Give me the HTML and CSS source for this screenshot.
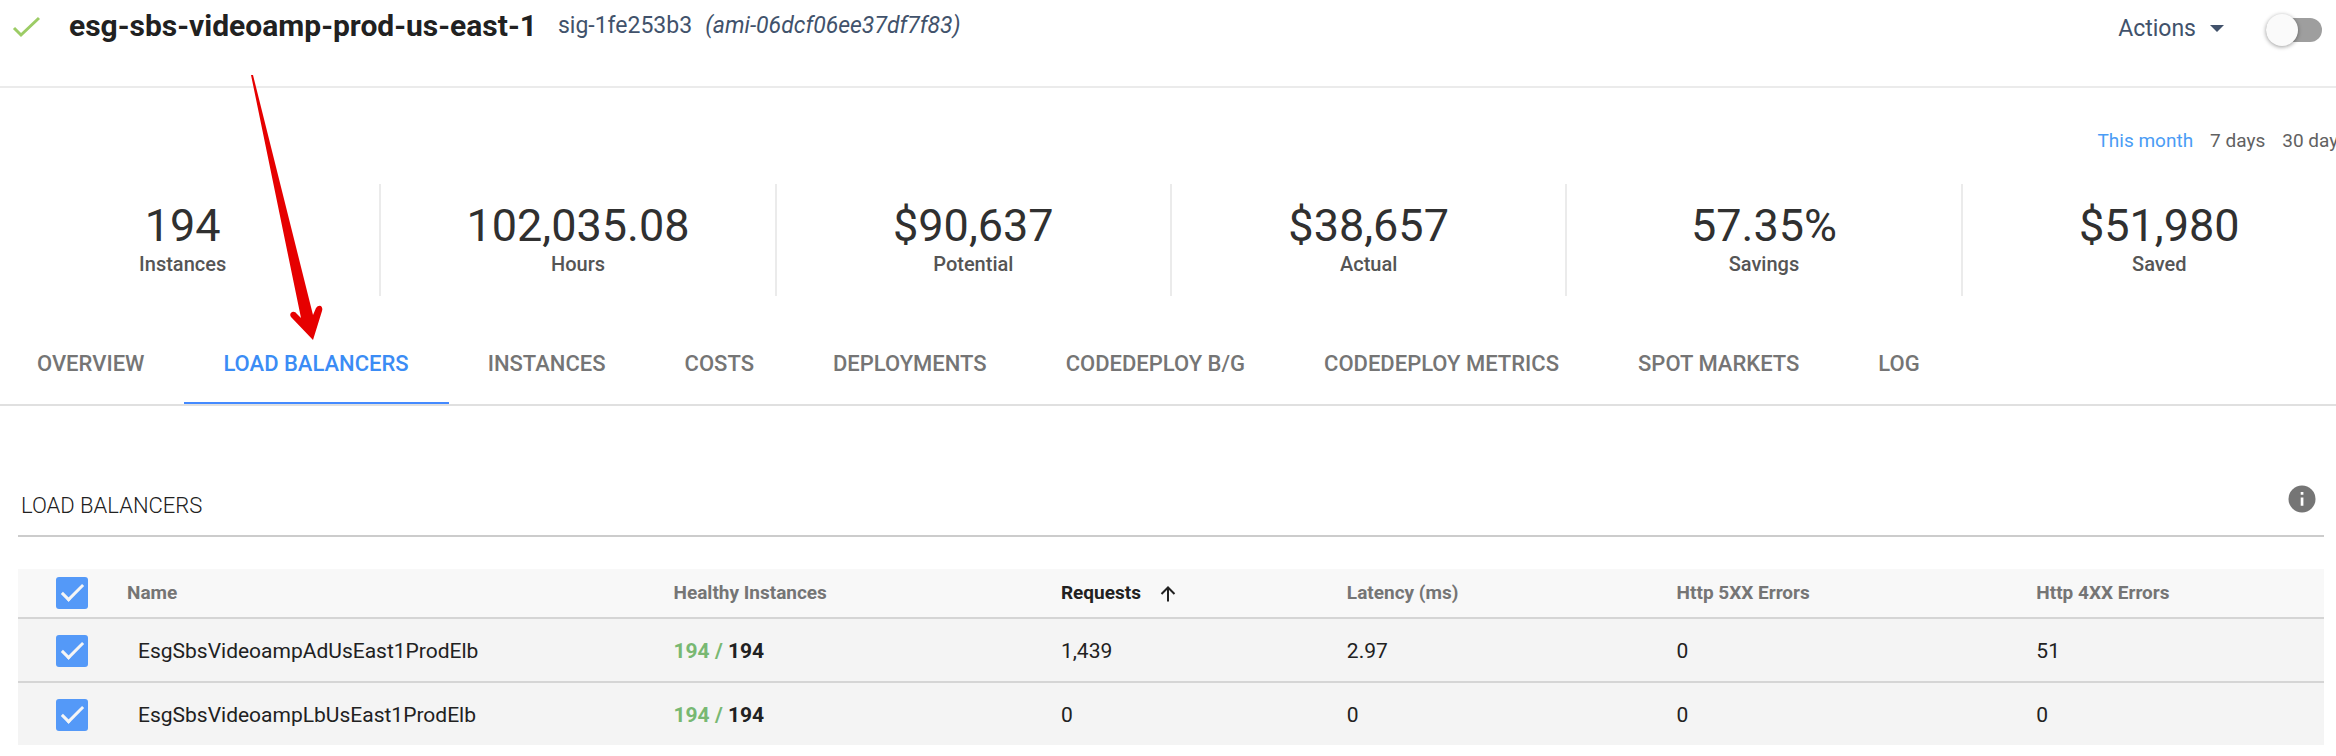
FILE: index.html
```html
<!DOCTYPE html>
<html lang="en">
<head>
<meta charset="utf-8">
<title>esg-sbs-videoamp-prod-us-east-1</title>
<link rel="stylesheet" href="styles.css">
</head>
<body>
<header class="header">
  <svg class="status" viewBox="0 0 32 24" aria-label="Healthy"><path d="M2 14 L9 21 L27 4" /></svg>
  <h1 class="title">esg-sbs-videoamp-prod-us-east-1</h1>
  <span class="group-id">sig-1fe253b3</span>
  <em class="image-id">(ami-06dcf06ee37df7f83)</em>
  <button class="actions" type="button">Actions <span class="caret"></span></button>
  <input class="switch" type="checkbox" role="switch" aria-label="Toggle view">
</header>

<nav class="ranges" aria-label="Time range">
  <a class="range range-active" href="#month">This month</a>
  <a class="range" href="#week">7 days</a>
  <a class="range" href="#days">30 days</a>
</nav>

<section class="stats">
  <div class="stat"><div class="stat-value">194</div><div class="stat-label">Instances</div></div>
  <div class="stat"><div class="stat-value">102,035.08</div><div class="stat-label">Hours</div></div>
  <div class="stat"><div class="stat-value">$90,637</div><div class="stat-label">Potential</div></div>
  <div class="stat"><div class="stat-value">$38,657</div><div class="stat-label">Actual</div></div>
  <div class="stat"><div class="stat-value">57.35%</div><div class="stat-label">Savings</div></div>
  <div class="stat"><div class="stat-value">$51,980</div><div class="stat-label">Saved</div></div>
</section>

<nav class="tabs" aria-label="Sections">
  <a class="tab" href="#overview">OVERVIEW</a>
  <a class="tab tab-active" href="#load-balancers">LOAD BALANCERS</a>
  <a class="tab" href="#instances">INSTANCES</a>
  <a class="tab" href="#costs">COSTS</a>
  <a class="tab" href="#deployments">DEPLOYMENTS</a>
  <a class="tab" href="#bg">CODEDEPLOY B/G</a>
  <a class="tab" href="#metrics">CODEDEPLOY METRICS</a>
  <a class="tab" href="#markets">SPOT MARKETS</a>
  <a class="tab" href="#log">LOG</a>
</nav>

<main class="panel">
  <div class="panel-head">
    <h2 class="panel-title">LOAD BALANCERS</h2>
    <button class="info" type="button" aria-label="Information">
      <svg viewBox="0 0 28 28"><circle cx="14" cy="14" r="13.5" fill="#757575"/><path d="M12.7 7h2.7v2.7h-2.7zM12.7 12.5h2.7v8.2h-2.7z" fill="#fff"/></svg>
    </button>
  </div>
  <table class="table">
    <colgroup><col class="c-check"><col class="c-name"><col class="c-healthy"><col class="c-requests"><col class="c-latency"><col class="c-5xx"><col class="c-4xx"></colgroup>
    <thead>
      <tr>
        <th><input class="check" type="checkbox" checked aria-label="Select all"></th>
        <th>Name</th>
        <th>Healthy Instances</th>
        <th class="sorted">Requests <svg class="sort" viewBox="0 0 16 16"><path d="M8 15.5V1.5M1.5 8L8 1.5L14.5 8"/></svg></th>
        <th>Latency (ms)</th>
        <th>Http 5XX Errors</th>
        <th>Http 4XX Errors</th>
      </tr>
    </thead>
    <tbody>
      <tr>
        <td><input class="check" type="checkbox" checked aria-label="Select EsgSbsVideoampAdUsEast1ProdElb"></td>
        <td class="name">EsgSbsVideoampAdUsEast1ProdElb</td>
        <td><b><span class="ok">194 /</span> 194</b></td>
        <td>1,439</td><td>2.97</td><td>0</td><td>51</td>
      </tr>
      <tr>
        <td><input class="check" type="checkbox" checked aria-label="Select EsgSbsVideoampLbUsEast1ProdElb"></td>
        <td class="name">EsgSbsVideoampLbUsEast1ProdElb</td>
        <td><b><span class="ok">194 /</span> 194</b></td>
        <td>0</td><td>0</td><td>0</td><td>0</td>
      </tr>
    </tbody>
  </table>
</main>

<svg class="pointer" viewBox="0 0 74 268" aria-hidden="true">
  <path d="M1 0 L3 0 L63 240 L66 233 Q68 230 71 231 Q73 233 72 236 L63 265 L41 242 Q39 239 42 237 Q45 236 47 239 L51 243 Z"/>
</svg>
</body>
</html>
```

FILE: styles.css
```css
*, *::before { box-sizing: border-box; }

body {
  position: relative;
  margin: 0;
  background: #fff;
  color: #212121;
  font-family: Roboto, "Liberation Sans", sans-serif;
  font-size: 21px;
  line-height: 24px;
  overflow-x: hidden;
}

.header {
  display: flex;
  align-items: center;
  height: 88px;
  padding: 0 14px 34px 12px;
  border-bottom: 2px solid #ebebeb;
}

.status { width: 32px; height: 24px; fill: none; stroke: #9ccc65; stroke-width: 3; }
.title { margin: 0 21px 0 25px; font-size: 30px; line-height: 36px; font-weight: 700; }
.group-id, .image-id { color: #41526b; font-size: 23px; }
.image-id { margin-left: 13px; }

.actions {
  display: flex;
  align-items: center;
  gap: 14px;
  margin-left: auto;
  padding: 5px 0 0;
  border: 0;
  background: none;
  color: #41526b;
  font: 23px/24px Roboto, "Liberation Sans", sans-serif;
}

.caret { border: 7px solid transparent; border-top-color: #41526b; border-bottom: 0; }

.switch {
  appearance: none;
  display: flex;
  align-items: center;
  width: 56px;
  height: 24px;
  margin: 8px 0 0 42px;
  border-radius: 12px;
  background: #9e9e9e;
}

.switch::before {
  content: "";
  width: 32px;
  height: 32px;
  border-radius: 50%;
  background: #fafafa;
  box-shadow: 0 1px 4px rgba(0, 0, 0, .4);
}

.ranges {
  display: flex;
  justify-content: flex-end;
  gap: 17px;
  margin-right: -12px;
  padding-top: 41px;
  font-size: 19px;
}

.range { color: #616161; text-decoration: none; }
.range-active { color: #4a9cf5; }

.stats { display: flex; padding: 31px 0 34px; margin: 0 -20px 0 -14px; }

.stat {
  flex: 1;
  height: 112px;
  padding-top: 18px;
  border-left: 2px solid #ebebeb;
  text-align: center;
}

.stat:first-child { border-left: 0; }
.stat-value { color: #303030; font-size: 45px; line-height: 48px; }
.stat-label { color: #555; font-size: 20px; font-weight: 500; line-height: 28px; }

.tabs { display: flex; border-bottom: 2px solid #e0e0e0; }

.tab {
  padding: 20px 40px 24px 39px;
  border-bottom: 2px solid transparent;
  color: #757575;
  font-size: 22px;
  font-weight: 500;
  line-height: 28px;
  text-decoration: none;
}

.tab:first-child { padding-left: 37px; }
.tab-active { border-color: #448aff; color: #3b8cf5; }

.panel { padding: 69px 12px 0 18px; }

.panel-head {
  display: flex;
  align-items: center;
  justify-content: space-between;
  height: 62px;
  padding: 0 8px 0 3px;
  border-bottom: 2px solid #ccc;
}

.panel-title { margin: 0; padding-top: 1px; font-size: 22px; font-weight: 300; }
.info { align-self: flex-start; width: 28px; height: 28px; margin-top: 10px; padding: 0; border: 0; background: none; }
.info svg { display: block; }

.table { width: 100%; margin-top: 32px; border-collapse: separate; border-spacing: 0; table-layout: fixed; }
.table th, .table td { padding: 0; text-align: left; }
.table th { height: 48px; background: #f8f8f8; color: #757575; font-size: 19px; font-weight: 700; }
.table td { height: 64px; padding-top: 2px; border-top: 2px solid #d5d5d5; background: #f4f4f4; }
.table .name { padding-left: 11px; }
.table .sorted { color: #212121; }

.c-check { width: 109px; }
.c-name { width: 23.7%; }
.c-healthy { width: 16.8%; }
.c-requests { width: 12.4%; }
.c-latency { width: 14.3%; }
.c-5xx { width: 15.6%; }

.ok { color: #78b872; }
.sort { width: 16px; height: 16px; margin-left: 14px; vertical-align: -3px; fill: none; stroke: #212121; stroke-width: 2; }

.check {
  appearance: none;
  display: block;
  width: 32px;
  height: 32px;
  margin: 0 0 0 38px;
  padding: 2px 0 0 11px;
  border-radius: 3px;
  background: #5499f8;
}

.check::before {
  content: "";
  display: block;
  width: 11px;
  height: 22px;
  border: solid #f5f5f5;
  border-width: 0 3px 3px 0;
  transform: rotate(45deg);
}

.pointer { position: absolute; left: 250px; top: 75px; width: 74px; height: 268px; fill: #e60000; }
```
